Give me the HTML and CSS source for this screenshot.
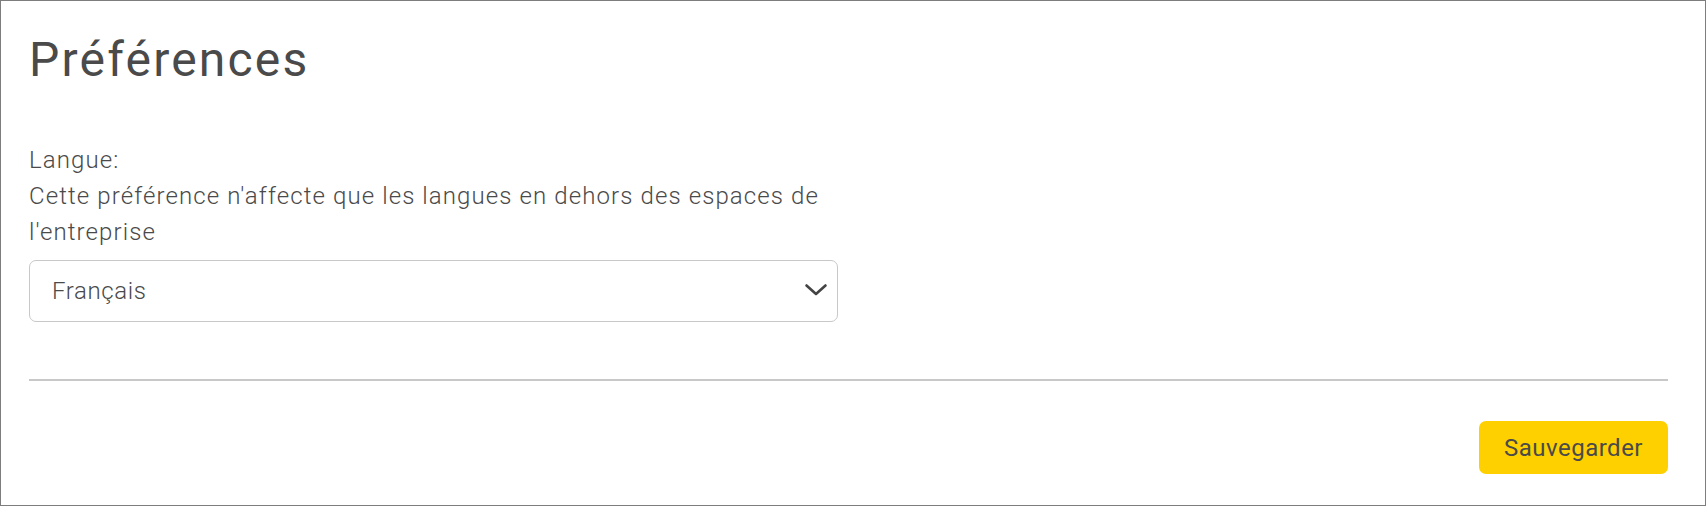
FILE: index.html
```html
<!DOCTYPE html>
<html lang="fr">

<head>
    <meta charset="UTF-8">
    <title>Préférences</title>
    <link rel="stylesheet" href="styles.css">
</head>

<body>
    <div class="panel">
        <h1>Préférences</h1>
        <form id="prefsForm">
            <div class="field">
                <label for="langue">Langue:</label>
                <p class="hint">Cette préférence n'affecte que les langues en dehors des espaces de l'entreprise</p>
                <div class="select-wrap">
                    <select id="langue">
                        <option value="fr" selected>Français</option>
                        <option value="en">English</option>
                        <option value="de">Deutsch</option>
                    </select>
                    <svg class="chevron" width="24" height="14" viewBox="0 0 24 14">
                        <polyline points="2.5,2.5 12,11 21.5,2.5" fill="none" stroke="#444" stroke-width="2.6" stroke-linecap="round" stroke-linejoin="round" />
                    </svg>
                </div>
            </div>
            <hr>
            <div class="actions">
                <button type="submit">Sauvegarder</button>
            </div>
        </form>
    </div>
</body>

</html>
```

FILE: styles.css
```css
body {
    font-family: Roboto, 'Liberation Sans', sans-serif;
    background: #fff;
    color: #4a4a4a;
    margin: 0;
    padding: 0;
}

.panel {
    height: 506px;
    box-sizing: border-box;
    border: 1px solid #7d7d7d;
    padding: 31px 37px 0 28px;
}

h1 {
    font-size: 48px;
    font-weight: 400;
    line-height: 56px;
    letter-spacing: 2.2px;
    margin: 0 0 54px 0;
    color: #4a4a4a;
}

.field {
    width: 809px;
}

label,
.hint {
    display: block;
    font-size: 24px;
    font-weight: 300;
    line-height: 36px;
    letter-spacing: 1.1px;
    margin: 0;
    color: #4a4a4a;
}

.select-wrap {
    position: relative;
    margin-top: 10px;
}

select {
    appearance: none;
    -webkit-appearance: none;
    width: 100%;
    height: 62px;
    box-sizing: border-box;
    border: 1px solid #c8c8c8;
    border-radius: 7px;
    background: #fff;
    padding: 0 50px 0 22px;
    font-family: inherit;
    font-size: 24px;
    font-weight: 300;
    letter-spacing: 0.6px;
    color: #4a4a4a;
}

.chevron {
    position: absolute;
    right: 10px;
    top: 23px;
    pointer-events: none;
}

hr {
    border: none;
    border-top: 2px solid #c8c8c8;
    margin: 57px 0 0 0;
}

.actions {
    display: flex;
    justify-content: flex-end;
    margin-top: 40px;
}

button {
    background: #ffd000;
    color: #4a4a4a;
    border: none;
    border-radius: 7px;
    height: 53px;
    padding: 0 25px;
    font-family: inherit;
    font-size: 24px;
    font-weight: 400;
    letter-spacing: 0.5px;
    cursor: pointer;
}
```
